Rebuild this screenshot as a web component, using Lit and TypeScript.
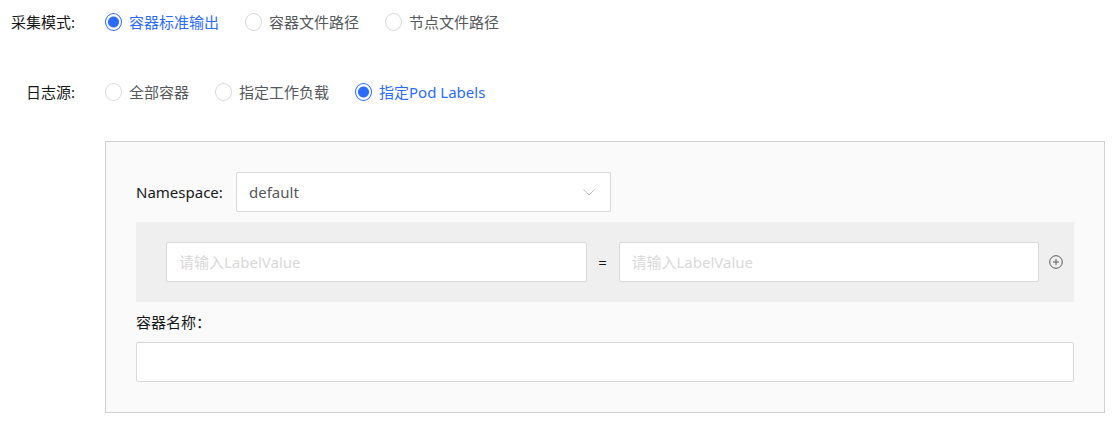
import { LitElement, html, css } from "lit";
import { customElement, state } from "lit/decorators.js";

const MODES = ["容器标准输出", "容器文件路径", "节点文件路径"];
const SOURCES = ["全部容器", "指定工作负载", "指定Pod Labels"];

@customElement("radio-row")
export class RadioRow extends LitElement {
  static properties = {
    label: {},
    name: {},
    options: { attribute: false },
    selected: { type: Number },
  };

  declare label: string;
  declare name: string;
  declare options: string[];
  declare selected: number;

  static styles = css`
    :host {
      display: block;
    }
    .row {
      display: flex;
      align-items: center;
      gap: 30px;
      height: 40px;
    }
    .title {
      width: 75px;
      text-align: right;
      color: #17181a;
    }
    .options {
      display: flex;
      gap: 26px;
    }
    .option {
      display: flex;
      align-items: center;
      gap: 7px;
      color: #55585c;
      cursor: pointer;
    }
    .option.on {
      color: #2b6bff;
    }
    .dot {
      appearance: none;
      box-sizing: border-box;
      width: 17px;
      height: 18px;
      margin: 0;
      border: 1px solid #d9d9d9;
      border-radius: 50%;
      background: #fff;
      cursor: pointer;
    }
    .dot:checked {
      border-color: #2b6bff;
      background: radial-gradient(circle, #2b6bff 5px, #fff 6px);
    }
  `;

  render() {
    return html`
      <div class="row" role="radiogroup" aria-labelledby="title">
        <span class="title" id="title">${this.label}</span>
        <div class="options">
          ${this.options.map(
            (text, i) => html`
              <label class="option ${i === this.selected ? "on" : ""}">
                <input
                  class="dot"
                  type="radio"
                  name=${this.name}
                  .checked=${i === this.selected}
                  @change=${() => (this.selected = i)}
                />
                <span>${text}</span>
              </label>
            `
          )}
        </div>
      </div>
    `;
  }
}

@customElement("app-root")
export class AppRoot extends LitElement {
  @state() namespace = "default";

  static styles = css`
    :host {
      display: block;
      box-sizing: border-box;
      padding: 2px 9px 9px 0;
      font: 15px/20px "Noto Sans", "Noto Sans CJK SC", sans-serif;
      color: #17181a;
    }
    .source {
      margin-top: 30px;
    }
    .panel {
      margin: 29px 0 0 105px;
      padding: 30px;
      border: 1px solid #d0d0d0;
      background: #fafafa;
    }
    .namespace {
      display: flex;
      align-items: center;
      margin-bottom: 10px;
    }
    .namespace label {
      width: 100px;
    }
    .select {
      display: grid;
      align-items: center;
      width: 40%;
    }
    .select > * {
      grid-area: 1 / 1;
    }
    .chevron {
      justify-self: end;
      margin-right: 16px;
      pointer-events: none;
    }
    .field {
      appearance: none;
      box-sizing: border-box;
      width: 100%;
      min-width: 0;
      height: 40px;
      margin: 0;
      padding: 0 12px;
      border: 1px solid #d9d9d9;
      border-radius: 2px;
      background: #fff;
      color: #55585c;
      font: inherit;
    }
    .field::placeholder {
      color: #d9d9d9;
      opacity: 1;
    }
    .pair {
      display: flex;
      align-items: center;
      padding: 20px 11px 20px 30px;
      background: #efefef;
    }
    .pair .field {
      flex: 1;
    }
    .equals {
      width: 32px;
      text-align: center;
    }
    .add {
      display: flex;
      margin: 0 0 0 10px;
      padding: 0;
      border: 0;
      background: none;
      cursor: pointer;
    }
    .caption {
      display: block;
      line-height: 40px;
    }
  `;

  render() {
    return html`
      <radio-row label="采集模式:" name="mode" .options=${MODES} .selected=${0}></radio-row>
      <radio-row class="source" label="日志源:" name="source" .options=${SOURCES} .selected=${2}></radio-row>
      <section class="panel">
        <div class="namespace">
          <label for="ns">Namespace:</label>
          <div class="select">
            <select class="field" id="ns">
              <option>${this.namespace}</option>
            </select>
            <svg class="chevron" width="12" height="12" viewBox="0 0 12 12" fill="none" stroke="#bfbfbf" aria-hidden="true">
              <path d="M.5 3.5 6 9l5.500-5.500" />
            </svg>
          </div>
        </div>
        <div class="pair">
          <input class="field" type="text" placeholder="请输入LabelValue" aria-label="Label key" />
          <span class="equals">=</span>
          <input class="field" type="text" placeholder="请输入LabelValue" aria-label="Label value" />
          <button class="add" type="button" aria-label="Add label">
            <svg width="14" height="14" viewBox="0 0 14 14" fill="none" stroke="#55585c">
              <circle cx="7" cy="7" r="6.300" />
              <path d="M4 7h6M7 4v6" />
            </svg>
          </button>
        </div>
        <label class="caption" for="container">容器名称：</label>
        <input class="field" id="container" type="text" />
      </section>
    `;
  }
}
